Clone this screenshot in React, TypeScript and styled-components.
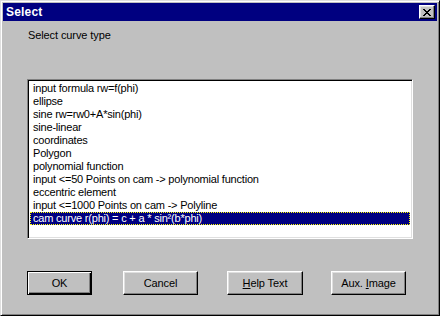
import React from "react";
import styled, { createGlobalStyle } from "styled-components";

const Global = createGlobalStyle`
  html, body { margin: 0; padding: 0; background: #c0c0c0; }
  body { font-family: "Liberation Sans", Arial, sans-serif; font-size: 11px; }
  * { box-sizing: border-box; }
`;

const Window = styled.div`
  width: 440px;
  height: 316px;
  background: #c0c0c0;
  border: 1px solid;
  border-color: #dfdfdf #000 #000 #dfdfdf;
  box-shadow: inset 1px 1px #fff, inset -1px -1px #808080;
  padding: 2px;
  display: flex;
  flex-direction: column;
`;

const TitleBar = styled.div`
  height: 18px;
  background: #000080;
  display: flex;
  align-items: center;
  padding: 0 2px 0 3px;
`;

const Title = styled.div`
  flex: 1;
  color: #fff;
  font-weight: bold;
  font-size: 12px;
  letter-spacing: 0.2px;
`;

const CloseButton = styled.div`
  width: 16px;
  height: 14px;
  background: #c0c0c0;
  border: 1px solid;
  border-color: #fff #000 #000 #fff;
  box-shadow: inset -1px -1px #808080, inset 1px 1px #dfdfdf;
  display: flex;
  align-items: center;
  justify-content: center;
`;

const Body = styled.div`
  flex: 1;
  display: flex;
  flex-direction: column;
  padding: 8px 0 0 24px;
`;

const Label = styled.div`
  color: #000;
  line-height: 13px;
  height: 13px;
  padding-left: 1px;
  letter-spacing: -0.1px;
`;

const ListBox = styled.div`
  margin-top: 37px;
  width: 386px;
  height: 160px;
  background: #fff;
  border: 1px solid;
  border-color: #808080 #fff #fff #808080;
  box-shadow: inset 1px 1px #000, inset -1px -1px #dfdfdf;
  padding: 2px;
  display: flex;
  flex-direction: column;
`;

const Item = styled.div<{ $selected?: boolean }>`
  height: 13px;
  line-height: 13px;
  padding-left: 3px;
  white-space: nowrap;
  overflow: hidden;
  letter-spacing: -0.2px;
  color: ${(p) => (p.$selected ? "#fff" : "#000")};
  background: ${(p) => (p.$selected ? "#000080" : "transparent")};
  outline: ${(p) => (p.$selected ? "1px dotted #ffff00" : "none")};
  outline-offset: -1px;
`;

const ButtonRow = styled.div`
  margin-top: 32px;
  display: flex;
  align-items: center;
`;

const Button = styled.div<{ $width: number; $default?: boolean; $gap: number }>`
  width: ${(p) => p.$width}px;
  height: 24px;
  margin-left: ${(p) => p.$gap}px;
  background: #c0c0c0;
  display: flex;
  align-items: center;
  justify-content: center;
  color: #000;
  border: 1px solid;
  border-color: ${(p) => (p.$default ? "#000" : "#fff #000 #000 #fff")};
  box-shadow: ${(p) =>
    p.$default
      ? "inset 1px 1px #fff, inset -1px -1px #000, inset -2px -2px #808080"
      : "inset -1px -1px #808080, inset 1px 1px #dfdfdf"};
  line-height: 13px;
  letter-spacing: -0.1px;
`;

const U = styled.span`
  text-decoration: underline;
`;

const items = [
  "input formula rw=f(phi)",
  "ellipse",
  "sine rw=rw0+A*sin(phi)",
  "sine-linear",
  "coordinates",
  "Polygon",
  "polynomial function",
  "input <=50 Points on cam -> polynomial function",
  "eccentric element",
  "input <=1000 Points on cam -> Polyline",
  "cam curve r(phi) = c + a * sin\u00b2(b*phi)",
];

export default function App() {
  return (
    <>
      <Global />
      <Window>
        <TitleBar>
          <Title>Select</Title>
          <CloseButton>
            <svg width="8" height="7" viewBox="0 0 8 7" shapeRendering="crispEdges">
              <path
                d="M0 0h2v1h-2zM6 0h2v1h-2zM1 1h2v1h-2zM5 1h2v1h-2zM2 2h4v1h-4zM3 3h2v1h-2zM2 4h4v1h-4zM1 5h2v1h-2zM5 5h2v1h-2zM0 6h2v1h-2zM6 6h2v1h-2z"
                fill="#000"
              />
            </svg>
          </CloseButton>
        </TitleBar>
        <Body>
          <Label>Select curve type</Label>
          <ListBox>
            {items.map((t, i) => (
              <Item key={i} $selected={i === items.length - 1}>
                {t}
              </Item>
            ))}
          </ListBox>
          <ButtonRow>
            <Button $width={65} $default $gap={0}>OK</Button>
            <Button $width={75} $gap={31}>Cancel</Button>
            <Button $width={76} $gap={29}>
              <span><U>H</U>elp Text</span>
            </Button>
            <Button $width={75} $gap={28}>
              <span>Aux. <U>I</U>mage</span>
            </Button>
          </ButtonRow>
        </Body>
      </Window>
    </>
  );
}
